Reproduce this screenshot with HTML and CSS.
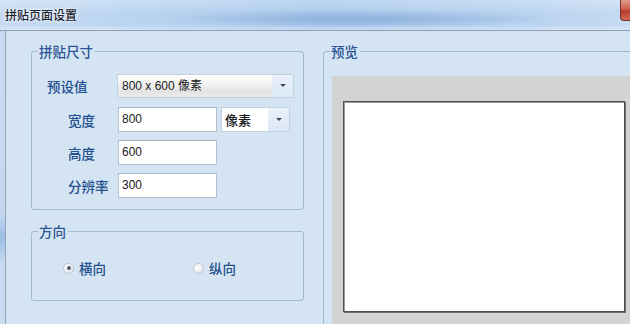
FILE: index.html
```html
<!DOCTYPE html>
<html lang="zh">
<head>
<meta charset="utf-8">
<title>拼贴页面设置</title>
<link rel="stylesheet" href="styles.css">
</head>
<body>
<div class="window">
  <div class="titlebar">
    <span class="title">拼贴页面设置</span>
    <span class="close"></span>
  </div>
  <div class="frame">
    <div class="client">
      <div class="left">
        <fieldset class="group size">
          <legend>拼贴尺寸</legend>
          <div class="form">
            <label class="lbl preset-lbl">预设值</label>
            <div class="combo preset"><span class="val">800 x 600 像素</span><span class="arrow"></span></div>
            <label class="lbl">宽度</label>
            <div class="pair">
              <div class="input w">800</div>
              <div class="combo unit"><span class="val">像素</span><span class="arrow"></span></div>
            </div>
            <label class="lbl">高度</label>
            <div class="input w">600</div>
            <label class="lbl">分辨率</label>
            <div class="input w">300</div>
          </div>
        </fieldset>
        <fieldset class="group orient">
          <legend>方向</legend>
          <div class="radios">
            <div class="radio checked"><span class="dot"></span><span class="rlbl">横向</span></div>
            <div class="radio"><span class="dot"></span><span class="rlbl">纵向</span></div>
          </div>
        </fieldset>
      </div>
      <fieldset class="group preview">
        <legend>预览</legend>
        <div class="canvas"><div class="paper"></div></div>
      </fieldset>
    </div>
  </div>
</div>
</body>
</html>
```

FILE: styles.css
```css
html, body {
  margin: 0;
  padding: 0;
}
body {
  width: 630px;
  height: 324px;
  overflow: hidden;
  background: #d5e4f3;
  font-family: "Noto Sans CJK SC", "Noto Sans", sans-serif;
}
.window {
  width: 630px;
  height: 324px;
  display: flex;
  flex-direction: column;
  overflow: hidden;
}
.titlebar {
  height: 31px;
  flex: none;
  display: flex;
  align-items: flex-start;
  justify-content: space-between;
  border-bottom: 1px solid #8e9fb3;
  box-sizing: border-box;
  background:
    radial-gradient(ellipse 200px 9px at 360px 19px, rgba(120,158,205,0.6), rgba(120,158,205,0) 100%),
    linear-gradient(180deg, rgba(255,255,255,0.25) 0%, rgba(255,255,255,0) 45%, rgba(255,255,255,0) 82%, rgba(255,255,255,0.35) 100%),
    linear-gradient(90deg, #c6dbf3 0%, #b8d3f0 25%, #aac9ec 50%, #b4d0ef 75%, #c5daf3 100%);
}
.title {
  margin: 7px 0 0 5px;
  font-size: 12px;
  line-height: 16px;
  font-weight: 500;
  color: #1b2330;
  text-shadow: 0 0 4px rgba(255,255,255,0.9), 0 0 2px rgba(255,255,255,0.9);
}
.close {
  width: 9px;
  height: 20px;
  border-bottom-left-radius: 4px;
  border: 1px solid #7a3028;
  border-top: none;
  border-right: none;
  background: linear-gradient(180deg, #e49a8c 0%, #d0604f 45%, #b93b2a 55%, #cf6a54 100%);
}
.frame {
  flex: 1;
  display: flex;
  padding-left: 5px;
  background: linear-gradient(180deg, #c9ddf2 0%, #c3d8f0 55%, #9cbde4 62%, #c7dbf1 70%, #cadef2 100%);
}
.client {
  flex: 1;
  display: flex;
  border-left: 1px solid #94a4b8;
  background: #d5e4f3;
  padding-left: 25px;
  gap: 19px;
}
.left {
  width: 273px;
  flex: none;
  display: flex;
  flex-direction: column;
}
.group {
  margin: 0;
  padding: 0;
  min-width: 0;
  border: 1px solid #a2b9d4;
  border-radius: 3px;
  box-sizing: border-box;
}
.group legend {
  margin-left: 6px;
  padding: 0 2px 0 1px;
  font-size: 13.5px;
  line-height: 16px;
  font-weight: 500;
  color: #2b5597;
}
.size {
  margin-top: 12px;
  height: 167px;
}
.form {
  display: grid;
  grid-template-columns: 86px auto;
  grid-auto-rows: 25px;
  row-gap: 8px;
  padding-top: 15px;
  align-items: center;
}
.form .lbl {
  font-size: 13.5px;
  line-height: 16px;
  font-weight: 500;
  color: #23508f;
  padding-left: 36px;
}
.form .preset-lbl {
  padding-left: 15px;
  position: relative;
  top: -1px;
}
.form .combo.preset {
  height: 24px;
  width: 177px;
  margin-left: -1px;
  align-self: start;
}
.input {
  height: 25px;
  box-sizing: border-box;
  border: 1px solid #b3c0cf;
  border-top-color: #a7b4c4;
  background: #fff;
  font-family: "Liberation Sans", Arial, sans-serif;
  font-size: 12px;
  line-height: 23px;
  padding-left: 3px;
  color: #1a1a1a;
}
.input.w {
  width: 99px;
}
.pair {
  display: flex;
  gap: 4px;
}
.combo {
  display: flex;
  align-items: stretch;
  box-sizing: border-box;
  border: 1px solid #c3d0df;
  font-size: 12px;
  color: #1a1a1a;
}
.combo .val {
  flex: 1;
  padding-left: 4px;
  line-height: 22px;
  font-family: "Liberation Sans", "Noto Sans CJK SC", sans-serif;
}
.combo.preset {
  background: linear-gradient(180deg, #ffffff 0%, #f3f3f3 40%, #e3e3e3 75%, #ececec 100%);
}
.combo.unit {
  width: 69px;
  height: 25px;
  background: #fff;
}
.combo.unit .val {
  font-family: "Noto Sans CJK SC", sans-serif;
  font-size: 13px;
  font-weight: 500;
  line-height: 23px;
  padding-left: 3px;
}
.arrow {
  width: 21px;
  position: relative;
  background: linear-gradient(180deg, #e9f1fa 0%, #dbe7f5 100%);
}
.arrow::after {
  content: "";
  position: absolute;
  left: 50%;
  top: 50%;
  margin-left: -3px;
  margin-top: -2px;
  border-left: 3px solid transparent;
  border-right: 3px solid transparent;
  border-top: 3px solid #3e4a5a;
}
.orient {
  margin-top: 13px;
  height: 78px;
}
.radios {
  display: grid;
  grid-template-columns: 130px 100px;
  padding: 21px 0 0 31px;
}
.radio {
  display: flex;
  align-items: center;
  gap: 5px;
  height: 16px;
}
.radio .dot {
  width: 11px;
  height: 11px;
  box-sizing: border-box;
  border-radius: 50%;
  border: 1px solid #c2c7cf;
  background: radial-gradient(circle at 40% 35%, #ffffff 0%, #eef0f3 50%, #d6dbe1 100%);
  position: relative;
}
.radio.checked .dot::after {
  content: "";
  position: absolute;
  left: 2.5px;
  top: 2.5px;
  width: 4px;
  height: 4px;
  border-radius: 50%;
  background: #4d5a6e;
}
.rlbl {
  font-size: 13.5px;
  line-height: 16px;
  font-weight: 500;
  color: #23508f;
}
.preview {
  margin-top: 12px;
  width: 330px;
  flex: none;
  height: 320px;
}
.canvas {
  margin: 17px 0 0 8px;
  width: 330px;
  height: 300px;
  background: #d3d3d3;
  padding: 25px 0 0 11px;
  box-sizing: border-box;
}
.paper {
  width: 282px;
  height: 211px;
  box-sizing: border-box;
  background: #fff;
  border: 1px solid #4f4f4f;
  box-shadow: 1px 1px 0 #6e6e6e, inset 1px 1px 0 #9a9a9a;
}
```
